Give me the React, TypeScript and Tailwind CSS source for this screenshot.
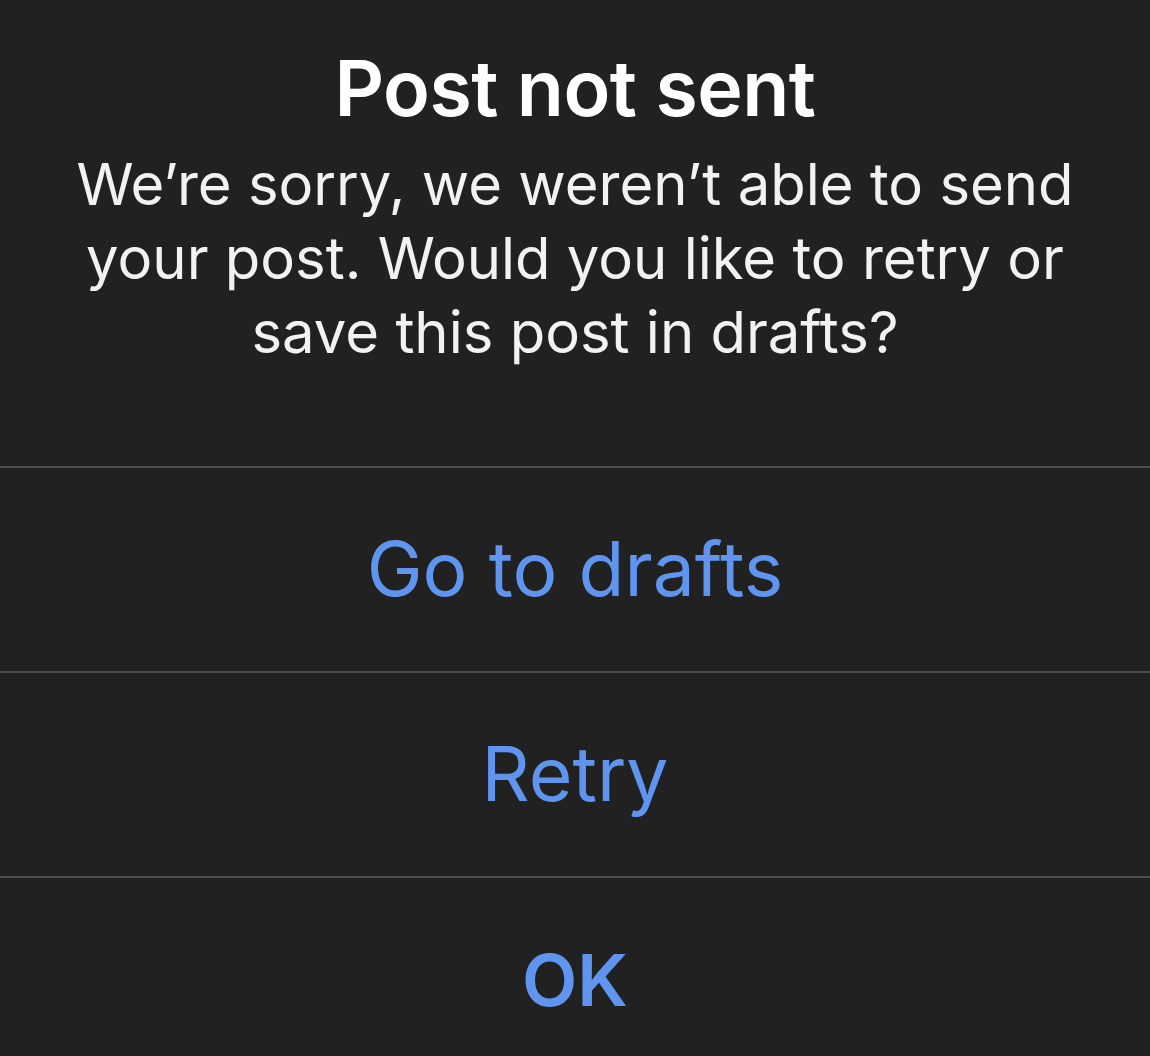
export default function App() {
  const font = { fontFamily: "Inter, 'Noto Sans', sans-serif" };
  return (
    <div className="w-[1150px] h-[1056px] overflow-hidden bg-[#212121] text-white" style={font}>
      <div className="h-[466px] flex flex-col items-center pt-[42px] px-4 text-center">
        <h1 className="text-[77px] leading-[92px] font-semibold tracking-[-0.5px]">Post not sent</h1>
        <p className="mt-[13px] text-[58px] leading-[74px] text-[#f2f2f2] whitespace-nowrap">
          We’re sorry, we weren’t able to send
          <br />
          your post. Would you like to retry or
          <br />
          save this post in drafts?
        </p>
      </div>
      <div className="h-[2px] bg-[#4e4e4e]" />
      <button className="w-full h-[203px] flex items-center justify-center text-[75px] text-[#5f95ef]">
        Go to drafts
      </button>
      <div className="h-[2px] bg-[#4e4e4e]" />
      <button className="w-full h-[203px] flex items-center justify-center text-[75px] text-[#5f95ef]">
        Retry
      </button>
      <div className="h-[2px] bg-[#4e4e4e]" />
      <button className="w-full h-[203px] flex items-center justify-center text-[72px] font-semibold text-[#5f95ef]">
        OK
      </button>
    </div>
  );
}
